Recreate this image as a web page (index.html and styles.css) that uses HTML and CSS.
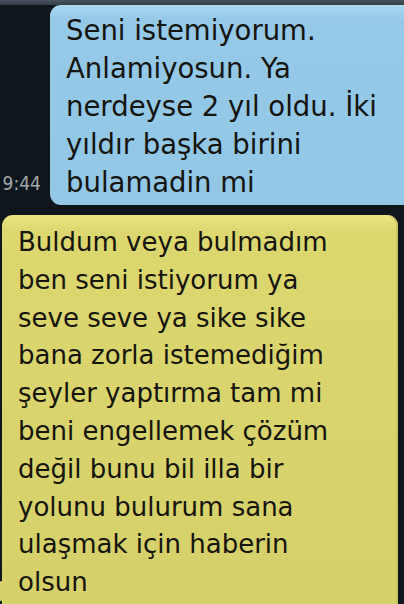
FILE: index.html
```html
<!DOCTYPE html>
<html>

<head>
    <meta charset="UTF-8">
    <title>Sohbet</title>
    <link rel="stylesheet" href="styles.css">
</head>

<body>
    <div class="chat">
        <div class="top-bar"></div>

        <div class="msg msg-out">
            <span class="time">9:44</span>
            <div class="bubble bubble-blue">
                Seni istemiyorum.<br>
                Anlamiyosun. Ya<br>
                nerdeyse 2 yıl oldu. İki<br>
                yıldır başka birini<br>
                bulamadin mi
            </div>
        </div>

        <div class="msg msg-in">
            <div class="bubble bubble-yellow">
                Buldum veya bulmadım<br>
                ben seni istiyorum ya<br>
                seve seve ya sike sike<br>
                bana zorla istemediğim<br>
                şeyler yaptırma tam mi<br>
                beni engellemek çözüm<br>
                değil bunu bil illa bir<br>
                yolunu bulurum sana<br>
                ulaşmak için haberin<br>
                olsun
            </div>
        </div>
    </div>
</body>

</html>
```

FILE: styles.css
```css
html,
body {
    margin: 0;
    padding: 0;
    background: #0f161c;
}

.chat {
    height: 604px;
    overflow: hidden;
    font-family: "DejaVu Sans", sans-serif;
    color: #15140f;
}

.top-bar {
    height: 5px;
    background: linear-gradient(#46525e, #333e48);
}

.msg {
    display: flex;
}

.msg-out {
    align-items: flex-end;
}

.time {
    flex: 0 0 50px;
    box-sizing: border-box;
    padding: 0 9px 11px 0;
    text-align: right;
    font-family: "DejaVu Sans Condensed", "DejaVu Sans", sans-serif;
    font-size: 19px;
    color: #a3a8ac;
    white-space: nowrap;
}

.bubble {
    font-size: 26px;
    line-height: 38px;
    white-space: nowrap;
    border-radius: 11px;
}

.bubble-blue {
    flex: 1;
    margin-right: -20px;
    padding: 6px 16px 4px 16px;
    font-size: 27.5px;
    background: linear-gradient(#acd9f1, #95c9e7 14px, #92c7e6);
}

.msg-in {
    margin-top: 10px;
    padding: 0 6px 0 2px;
}

.bubble-yellow {
    position: relative;
    flex: 1;
    height: 400px;
    padding: 9px 16px 0 16px;
    line-height: 37.8px;
    background: linear-gradient(#ebe683, #dcd76f 16px, #d5d06a);
    box-shadow: inset -2px 0 0 #c9c45f;
}

/* kuyruk */
.bubble-yellow::before {
    content: "";
    position: absolute;
    left: -3px;
    top: 366px;
    width: 6px;
    height: 20px;
    background: #d5d06a;
    border-radius: 3px 0 0 3px;
}
```
